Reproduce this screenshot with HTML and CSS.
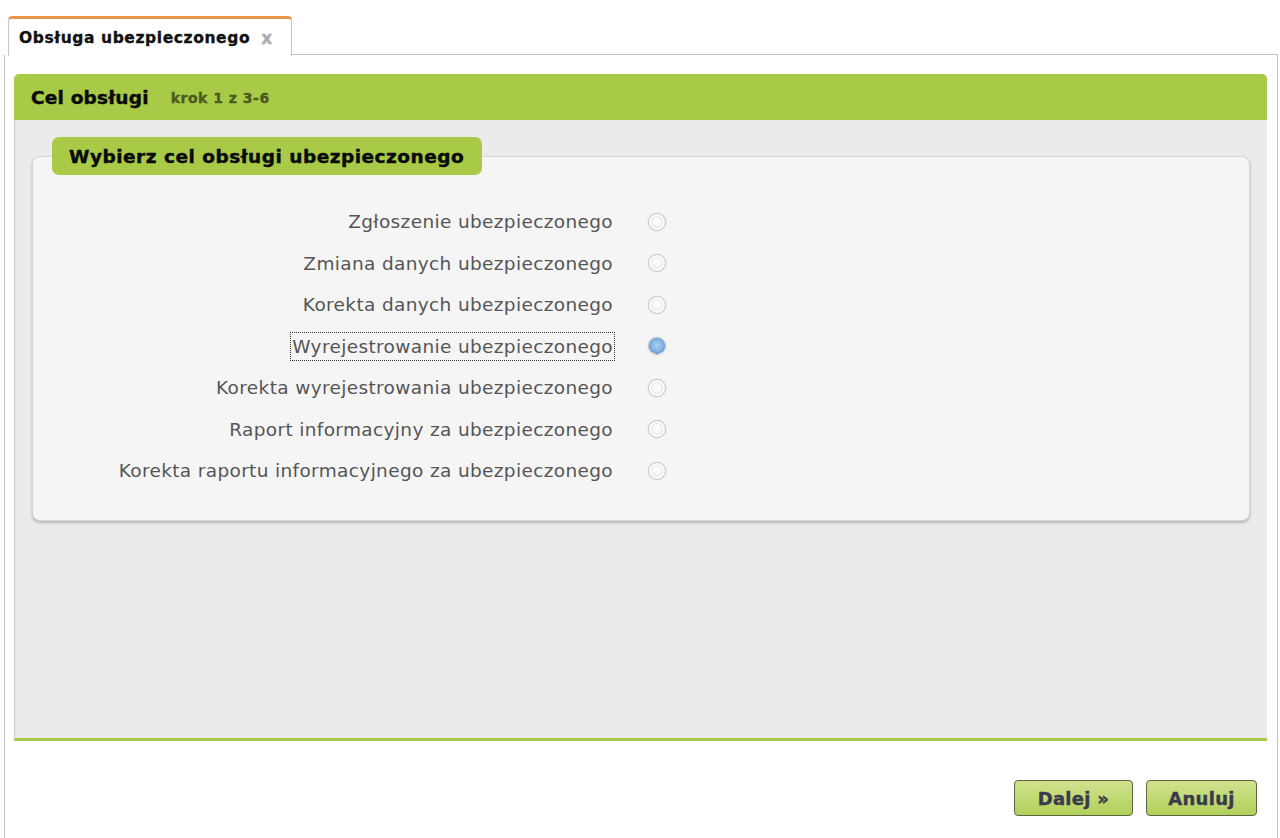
FILE: index.html
```html
<!DOCTYPE html>
<html lang="pl">
<head>
<meta charset="utf-8">
<title>Obsługa ubezpieczonego</title>
<link rel="stylesheet" href="styles.css">
</head>
<body>
<div class="tabs">
  <div class="tab">
    <span class="tab-title">Obsługa ubezpieczonego</span>
    <span class="tab-close">x</span>
  </div>
  <div class="tab-rest"></div>
</div>
<div class="panel">
  <div class="wizard">
    <div class="wizard-head">
      <span class="wizard-title">Cel obsługi</span>
      <span class="wizard-step">krok 1 z 3-6</span>
    </div>
    <div class="wizard-body">
      <div class="group">
        <div class="legend">Wybierz cel obsługi ubezpieczonego</div>
        <div class="options">
          <div class="opt"><span class="opt-label">Zgłoszenie ubezpieczonego</span><span class="radio"></span></div>
          <div class="opt"><span class="opt-label">Zmiana danych ubezpieczonego</span><span class="radio"></span></div>
          <div class="opt"><span class="opt-label">Korekta danych ubezpieczonego</span><span class="radio"></span></div>
          <div class="opt"><span class="opt-label focused">Wyrejestrowanie ubezpieczonego</span><span class="radio checked"></span></div>
          <div class="opt"><span class="opt-label">Korekta wyrejestrowania ubezpieczonego</span><span class="radio"></span></div>
          <div class="opt"><span class="opt-label">Raport informacyjny za ubezpieczonego</span><span class="radio"></span></div>
          <div class="opt"><span class="opt-label">Korekta raportu informacyjnego za ubezpieczonego</span><span class="radio"></span></div>
        </div>
      </div>
    </div>
  </div>
  <div class="actions">
    <button class="btn btn-next">Dalej »</button>
    <button class="btn btn-cancel">Anuluj</button>
  </div>
</div>
</body>
</html>
```
FILE: styles.css
```css
html, body {
  margin: 0;
  padding: 0;
  background: #ffffff;
}
body {
  font-family: "DejaVu Sans", Verdana, sans-serif;
  width: 1280px;
  height: 838px;
  overflow: hidden;
}
.tabs {
  display: flex;
  align-items: flex-end;
  padding-top: 15px;
  padding-left: 8px;
}
.tab {
  width: 284px;
  height: 40px;
  box-sizing: border-box;
  border-top: 3px solid #e8964c;
  border-left: 1px solid #c4c4c4;
  border-right: 1px solid #c4c4c4;
  border-radius: 4px 4px 0 0;
  background: #ffffff;
  display: flex;
  align-items: center;
  padding-left: 10px;
  position: relative;
  top: 1px;
}
.tab-title {
  font-weight: bold;
  font-size: 15.5px;
  letter-spacing: 0.6px;
  color: #111111;
  -webkit-text-stroke: 0.35px #111111;
}
.tab-close {
  margin-left: 11px;
  font-weight: bold;
  font-size: 17px;
  color: #a9adb3;
  font-family: "DejaVu Sans", sans-serif;
  -webkit-text-stroke: 0.4px #a9adb3;
}
.tab-rest {
  flex: 1;
  border-bottom: 1px solid #c4c4c4;
  margin-right: 2px;
}
.panel {
  margin-left: 4px;
  width: 1274px;
  height: 784px;
  box-sizing: border-box;
  border-left: 1px solid #c4c4c4;
  border-right: 1px solid #c4c4c4;
  padding: 19px 10px 0 9px;
}
.wizard-head {
  height: 46px;
  background: #a8ca46;
  border-radius: 5px 5px 0 0;
  display: flex;
  align-items: center;
  padding-left: 17px;
  box-sizing: border-box;
}
.wizard-title {
  font-weight: bold;
  font-size: 18.5px;
  letter-spacing: 0.2px;
  color: #0a0a0a;
  -webkit-text-stroke: 0.45px #0a0a0a;
}
.wizard-step {
  font-weight: bold;
  font-size: 14px;
  letter-spacing: 0.5px;
  color: #4b5a1e;
  -webkit-text-stroke: 0.35px #4b5a1e;
  margin-left: 22px;
  position: relative;
  top: 1px;
}
.wizard-body {
  background: #ebebeb;
  border-left: 1px solid #c8c8c8;
  border-bottom: 3px solid #a8ca46;
  height: 621px;
  box-sizing: border-box;
  padding: 17px 17px 0 17px;
}
.group {
  position: relative;
  margin-top: 19px;
  background: #f5f5f5;
  border: 1px solid #d6d6d6;
  border-radius: 8px;
  box-shadow: 0 2px 3px rgba(0, 0, 0, 0.22);
  height: 365px;
  box-sizing: border-box;
  padding-top: 44px;
}
.legend {
  position: absolute;
  top: -20px;
  left: 19px;
  height: 38px;
  padding: 0 18px 0 17px;
  background: #a8ca46;
  border-radius: 7px;
  display: flex;
  align-items: center;
  font-weight: bold;
  font-size: 18.5px;
  letter-spacing: 0.5px;
  color: #0a0a0a;
  -webkit-text-stroke: 0.45px #0a0a0a;
}
.options {
  display: flex;
  flex-direction: column;
}
.opt {
  display: grid;
  grid-template-columns: 582px 18px;
  column-gap: 33px;
  align-items: center;
  height: 41.5px;
}
.opt-label {
  justify-self: end;
  font-size: 18.5px;
  letter-spacing: 0.35px;
  color: #555555;
  line-height: 27px;
  padding: 0 1px;
  border: 1px solid transparent;
}
.opt-label.focused {
  border: 1px dotted #333333;
}
.radio {
  width: 16px;
  height: 16px;
  border-radius: 50%;
  border: 1px solid #c6c6c6;
  box-shadow: 0 0 2px rgba(0, 0, 0, 0.14), inset 0 0 0 2px #ffffff, inset 0 0 0 3px #dde6ee;
  background: radial-gradient(circle at 50% 45%, #ffffff 0, #eef3f7 60%, #dfe7ee 100%);
}
.radio.checked {
  border-color: #b8c4d0;
  background: radial-gradient(circle at 50% 45%, #a8d0f2 0, #7fb0e0 55%, #5e96cf 70%, #ffffff 72%, #e8eef4 100%);
  box-shadow: 0 0 2px rgba(0, 0, 0, 0.15);
}
.actions {
  display: flex;
  justify-content: flex-end;
  gap: 13px;
  padding-top: 39px;
  padding-right: 10px;
}
.btn {
  height: 36px;
  box-sizing: border-box;
  border: 1px solid #5d6442;
  border-radius: 4px;
  background: linear-gradient(#cfe38e, #b1d05a);
  font-family: "DejaVu Sans", Verdana, sans-serif;
  font-weight: bold;
  font-size: 18px;
  letter-spacing: 0.3px;
  color: #3a3a4c;
  -webkit-text-stroke: 0.4px #3a3a4c;
  padding: 0;
}
.btn-next {
  width: 119px;
}
.btn-cancel {
  width: 111px;
}
```
